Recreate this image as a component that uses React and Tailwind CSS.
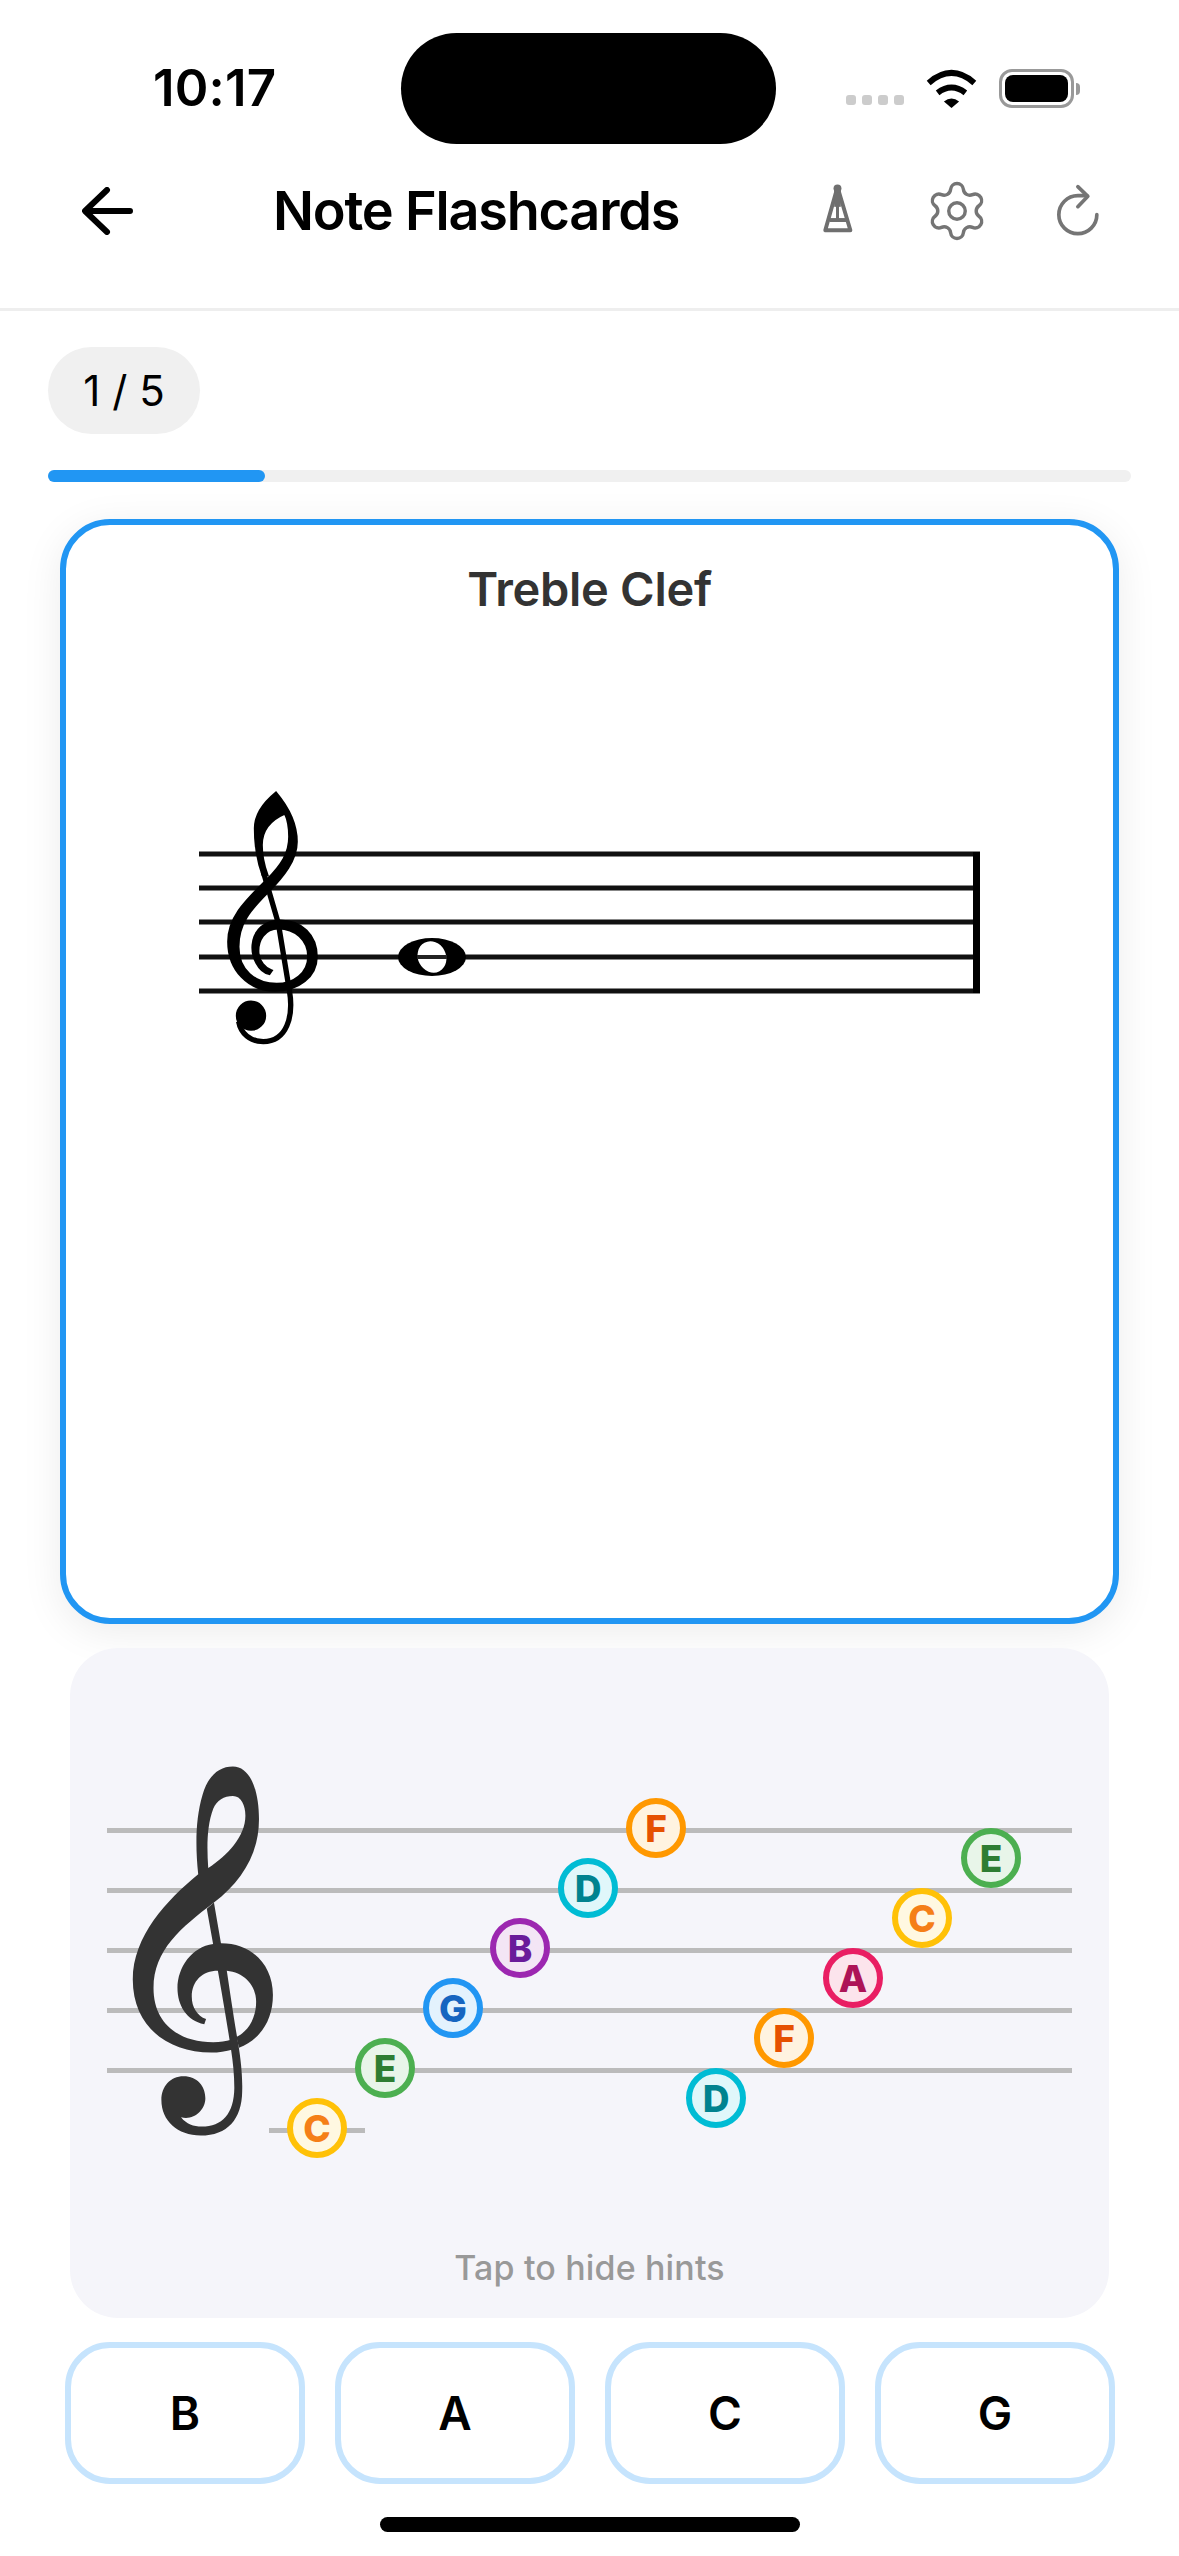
import React from 'react';
import { Settings } from 'lucide-react';

const pins = [
  { label: 'F', pos: 'left-[519px] top-[-30px]', color: 'border-[#ff9800] bg-[#fff3e0] text-[#e65100]' },
  { label: 'D', pos: 'left-[451px] top-[30px]', color: 'border-[#00bcd4] bg-[#e0f7fa] text-[#00838f]' },
  { label: 'B', pos: 'left-[383px] top-[90px]', color: 'border-[#9c27b0] bg-[#f3e5f5] text-[#6a1b9a]' },
  { label: 'G', pos: 'left-[316px] top-[150px]', color: 'border-[#2196f3] bg-[#e3f2fd] text-[#1565c0]' },
  { label: 'E', pos: 'left-[248px] top-[210px]', color: 'border-[#4caf50] bg-[#e8f5e9] text-[#2e7d32]' },
  { label: 'C', pos: 'left-[180px] top-[270px]', color: 'border-[#ffc107] bg-[#fff8e1] text-[#f57f17]' },
  { label: 'E', pos: 'left-[854px] top-[0px]', color: 'border-[#4caf50] bg-[#e8f5e9] text-[#2e7d32]' },
  { label: 'C', pos: 'left-[785px] top-[60px]', color: 'border-[#ffc107] bg-[#fff8e1] text-[#f57f17]' },
  { label: 'A', pos: 'left-[716px] top-[120px]', color: 'border-[#e91e63] bg-[#fce4ec] text-[#ad1457]' },
  { label: 'F', pos: 'left-[647px] top-[180px]', color: 'border-[#ff9800] bg-[#fff3e0] text-[#e65100]' },
  { label: 'D', pos: 'left-[579px] top-[240px]', color: 'border-[#00bcd4] bg-[#e0f7fa] text-[#00838f]' },
];

const Wifi = () => (
  <svg viewBox="528 80 152 118" className="w-[51px] h-[39px]">
    <path d="M535 122 Q604 62 673 122" fill="none" stroke="#000" strokeWidth="18" />
    <path d="M562 152 Q604 120 646 152" fill="none" stroke="#000" strokeWidth="18" />
    <path d="M604 198 L581 178 Q604 160 627 178 Z" fill="#000" />
  </svg>
);

const Metronome = () => (
  <svg viewBox="210 432 100 160" className="w-[33px] h-[53px] mt-[3px]" fill="none" stroke="#6f6f6f" strokeWidth="12" strokeLinejoin="round">
    <path d="M260 450 L223 581 L299 581 Z" />
    <path d="M236 550 H286" />
    <path d="M260 450 V555" strokeWidth="9" />
    <path d="M260 450 V510" strokeWidth="20" />
    <circle cx="260" cy="454" r="12" fill="#6f6f6f" stroke="none" />
  </svg>
);

const Redo = () => (
  <svg viewBox="910 432 140 165" className="w-[47px] h-[55px] mt-[5px]" fill="none" stroke="#757575" strokeWidth="11" strokeLinecap="round" strokeLinejoin="round">
    <path d="M1038 527 A57 57 0 1 1 981 470 H1008" />
    <path d="M981 443 L1011 472 L981 503" />
  </svg>
);

const SmallClef = () => (
  <g fill="#000" stroke="#000" strokeWidth="7">
    <path d="M318 98 C345 130 380 180 380 245 C380 300 340 350 295 395 C240 450 205 490 205 560 C205 630 255 672 320 672 C370 672 415 640 415 590 C415 540 375 505 325 505 C285 505 262 540 265 580 C268 605 285 625 305 632 L298 642 C265 635 245 590 248 555 C252 510 285 482 330 482 C395 482 440 525 440 590 C440 650 385 692 315 692 C235 692 175 630 175 545 C175 470 230 420 290 360 C335 315 358 280 358 230 C358 200 352 175 345 160 C310 175 275 205 275 255 C275 290 283 320 292 345 L278 345 C265 310 255 260 255 205 C255 160 285 125 318 98 Z" />
    <path d="M280 335 L325 490 L358 690 C372 770 350 845 280 845 C240 845 212 820 206 785" fill="none" strokeWidth="16" />
    <circle cx="243" cy="767" r="42" />
  </g>
);

const Sheet = () => (
  <svg viewBox="0 0 800 290" className="w-[800px] h-[290px] blur-[0.5px]">
    <g fill="#111">
      <rect x="9" y="71.5" width="781" height="5" />
      <rect x="9" y="105.5" width="781" height="5" />
      <rect x="9" y="139.5" width="781" height="5" />
      <rect x="9" y="174.5" width="781" height="5" />
      <rect x="9" y="208.5" width="781" height="5" />
      <rect x="783" y="72" width="7" height="141" fill="#000" />
    </g>
    <g transform="translate(-20 -20) scale(0.3333)">
      <SmallClef />
    </g>
    <ellipse cx="242" cy="177" rx="34" ry="19" fill="#000" />
    <ellipse cx="242" cy="177" rx="14" ry="16" transform="rotate(-28 242 177)" fill="#fff" />
    <rect x="227" y="175" width="30" height="4" fill="#222" />
  </svg>
);

const BigClef = () => (
  <svg viewBox="200 360 400 1085" preserveAspectRatio="none" className="absolute left-[24px] top-[-64px] w-[143px] h-[374px]" fill="#333333">
    <path fillRule="evenodd" d="M388 680 C380 600 380 520 400 450 C415 395 445 367 485 367 C535 367 558 440 558 520 C558 620 510 700 432 762 C340 835 263 900 263 1010 C263 1110 330 1167 430 1167 C450 1167 465 1164 480 1160 L485 1188 C465 1194 445 1197 425 1197 C300 1197 205 1120 205 985 C205 860 300 755 388 680 Z M416 662 C412 600 412 540 430 490 C440 465 460 453 485 453 C508 453 520 480 520 510 C520 570 470 625 416 662 Z" />
    <path d="M412 780 L432 762 L452 882 L468 960 C478 1030 488 1100 502 1185 C510 1240 512 1280 511 1310 C510 1390 470 1438 395 1438 C330 1438 285 1395 285 1335 C285 1295 310 1266 347 1266 C385 1266 408 1295 408 1330 C408 1365 375 1395 340 1385 C355 1405 375 1412 398 1412 C455 1412 488 1375 489 1300 C489 1260 485 1225 480 1190 C470 1120 455 1030 443 960 Z" />
    <path d="M430 882 C370 890 330 950 330 1010 C330 1060 355 1105 405 1115 L410 1100 C385 1090 370 1065 370 1035 C370 990 400 960 443 960 L468 960 C515 965 550 1000 550 1050 C550 1095 530 1135 495 1152 L502 1183 C560 1160 597 1105 597 1030 C597 945 540 880 452 880 Z" />
  </svg>
);

const Answer = ({ label }) => (
  <button className="w-[240px] h-[142px] rounded-[45px] border-[6px] border-[#c6e4fd] bg-white text-[46px] font-semibold text-black flex items-center justify-center">
    {label}
  </button>
);

export default function App() {
  return (
    <div className="w-[1179px] h-[2556px] bg-white flex flex-col overflow-hidden font-['Inter',sans-serif]">
      {/* status bar */}
      <div className="grid grid-cols-[401px_375px_1fr] h-[144px] pt-[33px] items-center">
        <div className="pl-[153px] text-[51px] leading-none font-semibold text-black tracking-[0.2px] mt-[-2px]">10:17</div>
        <div className="h-[111px] rounded-full bg-black"></div>
        <div className="flex items-center pl-[70px]">
          <div className="flex gap-[6px] mt-[22px]">
            <div className="w-[10px] h-[10px] rounded-[3px] bg-[#cccccc]"></div>
            <div className="w-[10px] h-[10px] rounded-[3px] bg-[#cccccc]"></div>
            <div className="w-[10px] h-[10px] rounded-[3px] bg-[#cccccc]"></div>
            <div className="w-[10px] h-[10px] rounded-[3px] bg-[#cccccc]"></div>
          </div>
          <div className="ml-[22px]"><Wifi /></div>
          <div className="ml-[22px] w-[75px] h-[39px] rounded-[13px] border-[3px] border-[#999999] p-[3px]">
            <div className="w-full h-full rounded-[8px] bg-black"></div>
          </div>
          <div className="ml-[2px] w-[4px] h-[12px] rounded-r-full bg-[#999999]"></div>
        </div>
      </div>

      {/* header */}
      <div className="h-[167px] border-b-[3px] border-[#eeeeee] pb-[30px] flex items-center pl-[82px] pr-[42px]">
        <svg viewBox="0 0 52 48" className="w-[52px] h-[48px]" fill="none" stroke="#000" strokeWidth="6" strokeLinecap="round" strokeLinejoin="round">
          <path d="M48 24 H4 M25 3 L3 24 L25 45" />
        </svg>
        <div className="ml-[139px] text-[54px] leading-none font-semibold text-black tracking-[-1.2px]">Note Flashcards</div>
        <div className="ml-auto flex">
          <div className="w-[120px] flex justify-center"><Metronome /></div>
          <div className="w-[120px] flex justify-center"><Settings size={66} strokeWidth={1.25} color="#757575" /></div>
          <div className="w-[120px] flex justify-center"><Redo /></div>
        </div>
      </div>

      {/* progress */}
      <div className="px-[48px] pt-[36px]">
        <div className="w-[152px] h-[87px] rounded-full bg-[#f0f0f0] flex items-center justify-center text-[42px] text-black">1 / 5</div>
        <div className="mt-[36px] h-[12px] rounded-full bg-[#f0f0f0]">
          <div className="w-1/5 h-full rounded-full bg-[#2196f3]"></div>
        </div>
      </div>

      {/* flashcard */}
      <div className="mt-[37px] mx-[60px] h-[1105px] rounded-[50px] border-[6px] border-[#2196f3] bg-white shadow-[0_8px_40px_rgba(0,0,0,0.08)] flex flex-col">
        <div className="pt-[40px] text-center text-[47px] leading-[48px] font-semibold tracking-[-0.3px] text-[#333333]">Treble Clef</div>
        <div className="mt-[167px] pl-[124px]"><Sheet /></div>
      </div>

      {/* hint staff */}
      <div className="mt-[24px] ml-[70px] w-[1039px] h-[670px] rounded-[48px] bg-[#f5f5fa] flex flex-col pt-[180px] px-[37px]">
        <div className="relative flex flex-col gap-[55px]">
          <div className="h-[5px] bg-[#bbbbbb]"></div>
          <div className="h-[5px] bg-[#bbbbbb]"></div>
          <div className="h-[5px] bg-[#bbbbbb]"></div>
          <div className="h-[5px] bg-[#bbbbbb]"></div>
          <div className="h-[5px] bg-[#bbbbbb]"></div>
          <div className="absolute left-[162px] top-[300px] w-[96px] h-[5px] bg-[#bbbbbb]"></div>
          <BigClef />
          {pins.map((pin, i) => (
            <div key={i} className={`absolute w-[60px] h-[60px] rounded-full border-[6px] flex items-center justify-center text-[37px] leading-none font-extrabold ${pin.pos} ${pin.color}`}>
              {pin.label}
            </div>
          ))}
        </div>
        <div className="mt-auto pb-[30px] text-center text-[34px] leading-[40px] font-medium text-[#999999] tracking-[0.15px]">Tap to hide hints</div>
      </div>

      {/* answers */}
      <div className="mt-[24px] pl-[65px] flex gap-[30px]">
        <Answer label="B" />
        <Answer label="A" />
        <Answer label="C" />
        <Answer label="G" />
      </div>

      {/* home indicator */}
      <div className="mt-[33px] mx-auto w-[420px] h-[15px] rounded-full bg-black"></div>
    </div>
  );
}
